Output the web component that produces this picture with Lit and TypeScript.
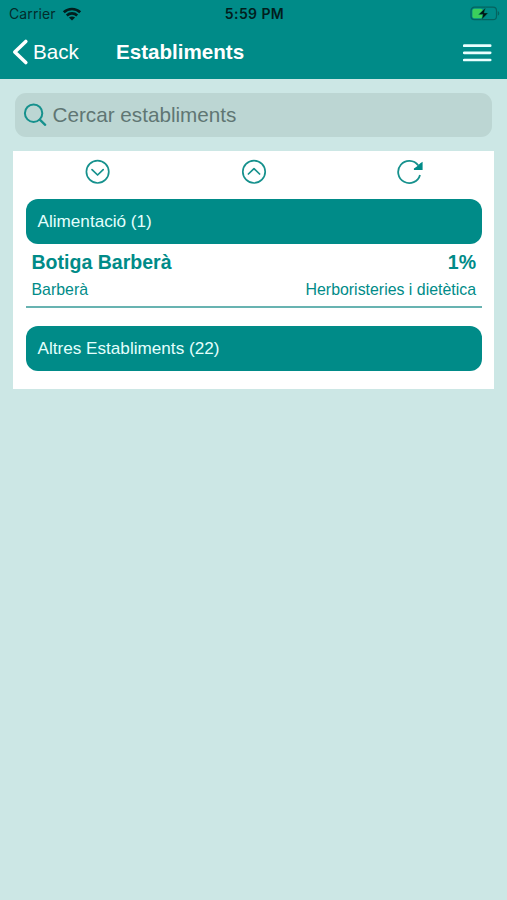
import { LitElement, html, css } from "lit";
import { customElement } from "lit/decorators.js";

@customElement("app-root")
export class AppRoot extends LitElement {
  static styles = css`
    :host {
      display: block;
      box-sizing: border-box;
      height: 100vh;
      background: #cce7e5;
      color: #008b88;
      font-family: "Liberation Sans", Arial, sans-serif;
      overflow: hidden;
    }
    * { box-sizing: border-box; }
    svg { display: block; flex: none; }
    header { height: 79px; background: #008b88; }
    .status {
      height: 28px;
      padding: 0 7px 0 9px;
      display: grid;
      grid-template-columns: 1fr auto 1fr;
      align-items: center;
      color: #032c2b;
      font: 400 14px/28px Inter, sans-serif;
    }
    .carrier { display: flex; align-items: center; gap: 6px; letter-spacing: 0.1px; }
    .clock { font-weight: 600; font-size: 14px; letter-spacing: 0.4px; color: #021e1d; }
    .battery { justify-self: end; }
    .nav {
      height: 48px;
      padding: 0 15px 0 12px;
      display: flex;
      align-items: center;
      color: #fff;
      font-size: 20.6px;
      line-height: 48px;
    }
    .back { display: flex; align-items: center; width: 104px; gap: 4px; }
    .title { flex: 1; font-weight: 700; }
    .search {
      height: 44px;
      margin: 13.5px 15px 14.5px 15px;
      padding: 0 8px;
      border-radius: 11px;
      background: #bcd6d3;
      display: flex;
      align-items: center;
      gap: 5.5px;
      color: #607673;
      font-size: 20.7px;
      line-height: 44px;
    }
    .card { margin: 0 13px; height: 238px; padding: 0 12px 0 13px; background: #fff; }
    .tools { display: grid; grid-template-columns: repeat(3, 1fr); height: 47.5px; margin: 0 -6px; padding-top: 8px; justify-items: center; }
    .group {
      height: 45.5px;
      padding-left: 11.5px;
      border-radius: 12px;
      background: #008b88;
      color: #e4fffd;
      font-size: 17.15px;
      line-height: 45px;
    }
    .item { height: 63.5px; margin-bottom: 18px; padding: 5px 6px 0 5.5px; border-bottom: 2px solid #68b3b1; }
    .row { display: flex; justify-content: space-between; }
    .name { font-size: 19.55px; font-weight: 700; line-height: 26px; }
    .detail { font-size: 15.9px; line-height: 30px; }
  `;

  render() {
    return html`
      <header>
        <div class="status">
          <div class="carrier">
            <span>Carrier</span>
            <svg width="20" height="14" viewBox="0 0 20 14" fill="none" stroke="#021e1d" stroke-width="2.7">
              <path d="M1.8 5.2C6.4.9 13.6.9 18.2 5.2M4.8 8.4c3-2.7 7.4-2.7 10.4 0" />
              <path d="M10 13.6 6.9 10.6c1.8-1.6 4.4-1.6 6.2 0Z" fill="#021e1d" stroke="none" />
            </svg>
          </div>
          <span class="clock">5:59 PM</span>
          <svg class="battery" width="30" height="16" viewBox="0 0 30 16">
            <rect x="1" y="1.2" width="25.5" height="12.5" rx="3.5" fill="none" stroke="#05635f" stroke-width="1.2" />
            <rect x="2.4" y="2.7" width="10.5" height="9.5" rx="2" fill="#3bcf5c" />
            <path d="M27.8 5c2 1 2 3.8 0 4.8Z" fill="#05635f" />
            <path d="M15.6 1.7 8.6 8.4h4.3l-1.3 5.3 6.6-6.8h-4.1Z" fill="#001513" stroke="#078d72" stroke-width=".5" />
          </svg>
        </div>
        <div class="nav">
          <div class="back">
            <svg width="17" height="28" viewBox="0 0 17 28" fill="none" stroke="#fff" stroke-width="3.6" stroke-linecap="round" stroke-linejoin="round">
              <path d="M13.8 3.5 2.8 14l11 10.5" />
            </svg>
            <span>Back</span>
          </div>
          <span class="title">Establiments</span>
          <svg width="29" height="20" viewBox="0 0 29 20" stroke="#e9ffff" stroke-width="2.7" stroke-linecap="round">
            <path d="M1.2 3.7h26M1.2 10.8h26M1.2 18h26" />
          </svg>
        </div>
      </header>
      <div class="search">
        <svg width="24" height="24" viewBox="0 0 24 24" fill="none" stroke="#16918d" stroke-width="2" stroke-linecap="round">
          <circle cx="10.6" cy="10.2" r="8.7" />
          <path d="m16.8 16.6 5.4 5.2" stroke-width="2.3" />
        </svg>
        <span>Cercar establiments</span>
      </div>
      <main class="card">
        <div class="tools">
          <svg width="26" height="26" viewBox="0 0 26 26" fill="none" stroke="#16918d" stroke-width="1.7" stroke-linecap="round" stroke-linejoin="round">
            <circle cx="12.6" cy="12.8" r="11.2" /><path d="m7 10.6 5.6 5.4 5.6-5.4" />
          </svg>
          <svg width="26" height="26" viewBox="0 0 26 26" fill="none" stroke="#16918d" stroke-width="1.7" stroke-linecap="round" stroke-linejoin="round">
            <circle cx="13" cy="12.8" r="11.2" /><path d="m7.4 15 5.6-5.4 5.6 5.4" />
          </svg>
          <svg width="28" height="26" viewBox="0 0 28 26" fill="none" stroke="#16918d" stroke-width="1.8">
            <path d="M24 15.9A11.1 11.1 0 1 1 22.2 6.4" />
            <path d="M26.6 2.8v8.3h-8.7V9.4l3-1.8 3.4-3.4Z" fill="#008b88" stroke="none" />
          </svg>
        </div>
        <div class="group">Alimentació (1)</div>
        <div class="item">
          <div class="row name"><span>Botiga Barberà</span><span>1%</span></div>
          <div class="row detail"><span>Barberà</span><span>Herboristeries i dietètica</span></div>
        </div>
        <div class="group">Altres Establiments (22)</div>
      </main>
    `;
  }
}
